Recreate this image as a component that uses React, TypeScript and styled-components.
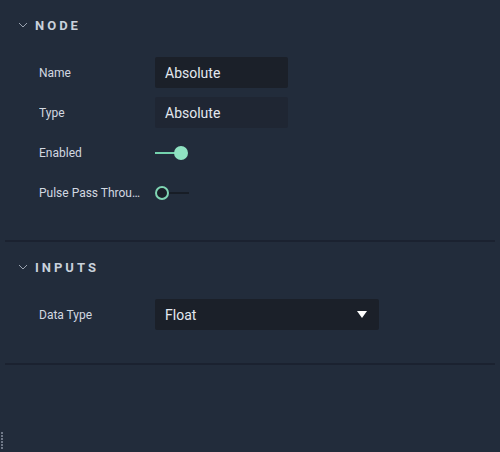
import React from "react";
import styled, { createGlobalStyle } from "styled-components";

const Global = createGlobalStyle`
  html, body { margin: 0; padding: 0; background: #222c3b; }
  body { font-family: Roboto, "Liberation Sans", Arial, sans-serif; }
`;

const Panel = styled.div`
  position: relative;
  width: 500px;
  height: 452px;
  background: #222c3b;
  overflow: hidden;
`;

const Section = styled.section`
  display: flex;
  flex-direction: column;
`;

const Header = styled.div`
  height: 50px;
  display: flex;
  align-items: center;
  padding-left: 18px;
  gap: 7px;
  color: #c9d1dc;
`;

const HeaderTitle = styled.span`
  font-size: 13px;
  font-weight: 700;
  letter-spacing: 3px;
`;

const Rows = styled.div<{ $bottom: number }>`
  display: flex;
  flex-direction: column;
  gap: 9px;
  padding: 7px 0 ${(p) => p.$bottom}px 39px;
`;

const Row = styled.div`
  display: flex;
  align-items: center;
  height: 31px;
`;

const Label = styled.div`
  width: 104px;
  margin-right: 12px;
  font-size: 12px;
  color: #d2d8e1;
  white-space: nowrap;
  overflow: hidden;
  text-overflow: ellipsis;
`;

const Field = styled.div<{ $bg: string; $w: number }>`
  width: ${(p) => p.$w}px;
  height: 31px;
  box-sizing: border-box;
  background: ${(p) => p.$bg};
  border-radius: 2px;
  display: flex;
  align-items: center;
  justify-content: space-between;
  padding: 0 12px 0 10px;
  font-size: 14px;
  color: #e3e8ef;
`;

const Divider = styled.hr`
  margin: 0 5px;
  border: none;
  height: 2px;
  background: #1b2230;
`;

const Slider = styled.div`
  position: relative;
  width: 34px;
  height: 14px;
`;

const Track = styled.div<{ $on: boolean }>`
  position: absolute;
  left: ${(p) => (p.$on ? 0 : 12)}px;
  right: ${(p) => (p.$on ? 8 : 0)}px;
  top: 6px;
  height: 2px;
  background: ${(p) => (p.$on ? "#74d2ad" : "#171d26")};
`;

const Thumb = styled.div<{ $on: boolean }>`
  position: absolute;
  top: 0;
  left: ${(p) => (p.$on ? 19 : 0)}px;
  width: 14px;
  height: 14px;
  box-sizing: border-box;
  border-radius: 50%;
  background: ${(p) => (p.$on ? "#8fe3c2" : "#1a2029")};
  border: ${(p) => (p.$on ? "none" : "2px solid #7fd5b3")};
`;

const Grip = styled.div`
  position: absolute;
  left: 1px;
  bottom: 3px;
  display: flex;
  flex-direction: column;
  gap: 1px;
`;

const GripDot = styled.span`
  width: 2px;
  height: 2px;
  background: #6f7887;
`;

const Chevron = () => (
  <svg width="10" height="6" viewBox="0 0 10 6">
    <path d="M1 1 L5 5 L9 1" fill="none" stroke="#9aa3b0" strokeWidth="1" />
  </svg>
);

const Caret = () => (
  <svg width="10" height="8" viewBox="0 0 10 8">
    <path d="M0 0 H10 L5 7 Z" fill="#ffffff" />
  </svg>
);

const Toggle = ({ on }: { on: boolean }) => (
  <Slider>
    <Track $on={on} />
    <Thumb $on={on} />
  </Slider>
);

export default function App() {
  return (
    <>
      <Global />
      <Panel>
        <Section>
          <Header>
            <Chevron />
            <HeaderTitle>NODE</HeaderTitle>
          </Header>
          <Rows $bottom={32}>
            <Row>
              <Label>Name</Label>
              <Field $bg="#1b2029" $w={133}>Absolute</Field>
            </Row>
            <Row>
              <Label>Type</Label>
              <Field $bg="#1f2633" $w={133}>Absolute</Field>
            </Row>
            <Row>
              <Label>Enabled</Label>
              <Toggle on />
            </Row>
            <Row>
              <Label title="Pulse Pass Through">Pulse Pass Through</Label>
              <Toggle on={false} />
            </Row>
          </Rows>
          <Divider />
        </Section>
        <Section>
          <Header>
            <Chevron />
            <HeaderTitle>INPUTS</HeaderTitle>
          </Header>
          <Rows $bottom={33}>
            <Row>
              <Label>Data Type</Label>
              <Field $bg="#1b2029" $w={224}>
                Float
                <Caret />
              </Field>
            </Row>
          </Rows>
          <Divider />
        </Section>
        <Grip>
          {Array.from({ length: 6 }).map((_, i) => (
            <GripDot key={i} />
          ))}
        </Grip>
      </Panel>
    </>
  );
}
